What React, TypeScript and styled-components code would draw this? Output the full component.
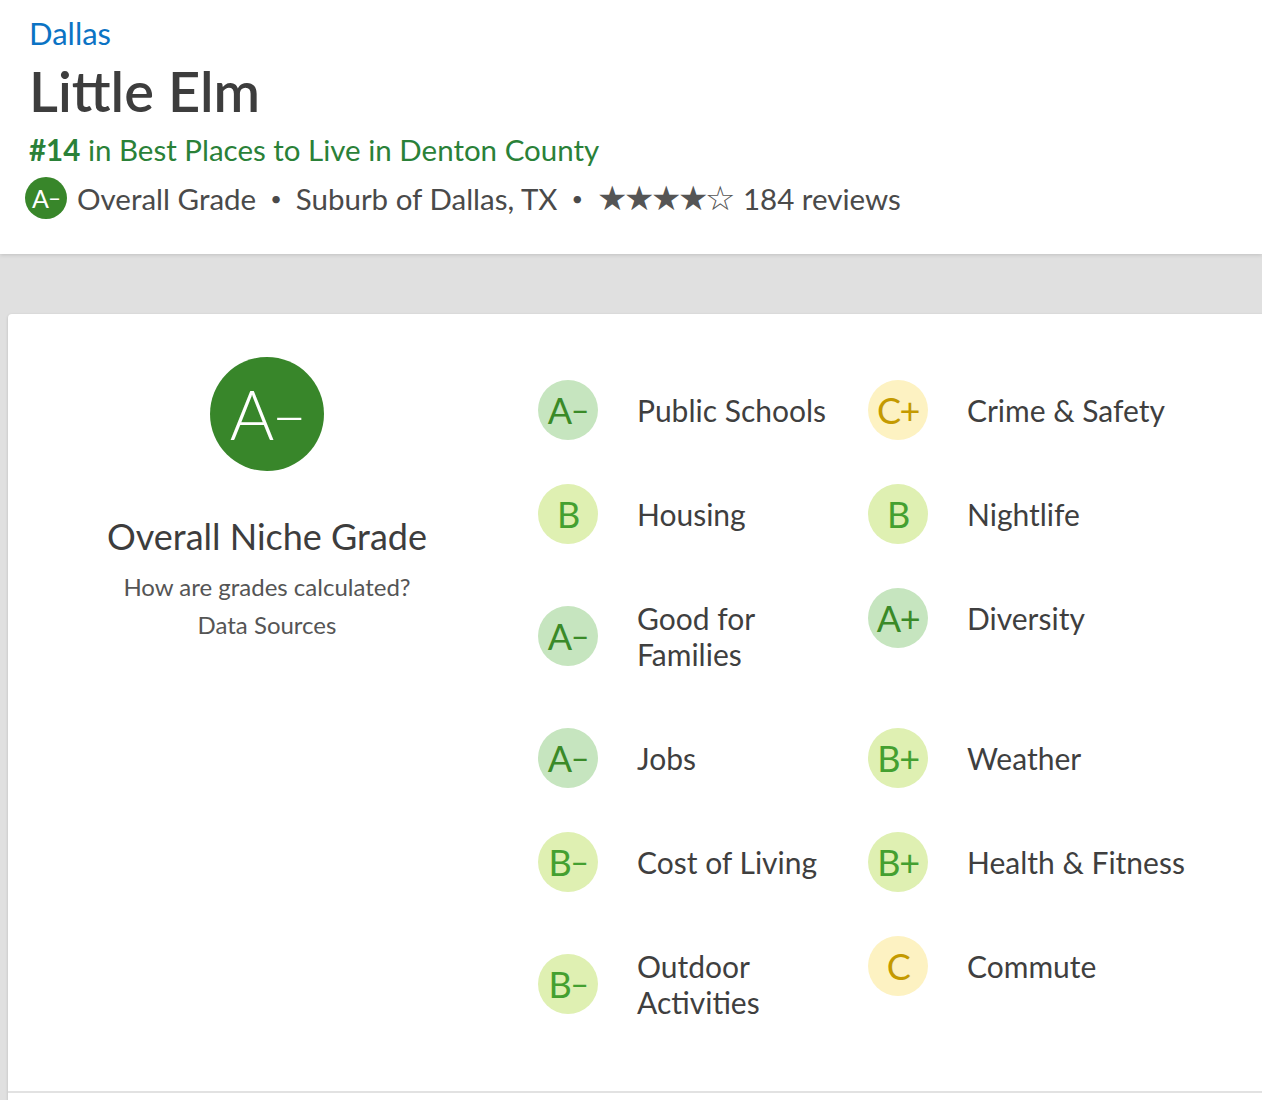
import React from 'react';
import styled, { createGlobalStyle } from 'styled-components';

const GlobalStyle = createGlobalStyle`
  body {
    margin: 0;
    background: #e0e0e0;
    font-family: Lato, 'Liberation Sans', sans-serif;
    overflow-x: hidden;
  }
`;

const Header = styled.header`
  position: relative;
  z-index: 1;
  height: 254px;
  box-sizing: border-box;
  padding: 15px 29px 0;
  background: #ffffff;
  box-shadow: 0 1px 4px rgba(0, 0, 0, 0.14);
`;

const Crumb = styled.a`
  display: block;
  color: #0b73c4;
  font-size: 31px;
  line-height: 36px;
  text-decoration: none;
`;

const Title = styled.h1`
  margin: 10px 0 0;
  color: #3d3d3d;
  font-size: 56px;
  line-height: 60px;
  font-weight: 600;
`;

const Ranking = styled.div`
  margin-top: 9px;
  color: #2a8138;
  font-size: 29.5px;
  line-height: 40px;

  strong {
    font-weight: 700;
  }
`;

const MetaRow = styled.div`
  display: flex;
  align-items: center;
  height: 44px;
  margin-top: 6px;
  margin-left: -4px;
  color: #4a4a4a;
  font-size: 29.5px;
`;

const tones = {
  A: { bg: '#c6e5bf', fg: '#3a8a28' },
  B: { bg: '#dff0b2', fg: '#44a030' },
  C: { bg: '#fdf2c2', fg: '#c49a00' },
};

type Tone = keyof typeof tones;

const Badge = styled.div<{ $size: number; $solid?: boolean; $tone: Tone }>`
  flex: none;
  display: flex;
  align-items: center;
  justify-content: center;
  width: ${({ $size }) => $size}px;
  height: ${({ $size }) => $size}px;
  border-radius: 50%;
  background: ${({ $solid, $tone }) => ($solid ? '#38862a' : tones[$tone].bg)};
  color: ${({ $solid, $tone }) => ($solid ? '#ffffff' : tones[$tone].fg)};
  font-size: ${({ $size }) => Math.round($size * 0.6)}px;
  font-weight: ${({ $size }) => ($size > 80 ? 300 : 400)};
  line-height: 1;
  letter-spacing: -0.04em;
`;

const Modifier = styled.span<{ $minus: boolean }>`
  font-size: ${({ $minus }) => ($minus ? '0.9em' : '1em')};
  vertical-align: ${({ $minus }) => ($minus ? '0.15em' : '0')};
`;

const Dot = styled.span`
  margin: 0 14px;
  font-size: 20px;
`;

const Stars = styled.span`
  margin-right: 11px;
  color: #555555;
  font-family: 'DejaVu Sans', sans-serif;
  font-size: 34px;
  letter-spacing: -3.5px;
`;

const Band = styled.main`
  padding: 60px 0 0 8px;
`;

const Card = styled.div`
  min-height: 900px;
  margin-right: -8px;
  background: #ffffff;
  border-radius: 4px 0 0 0;
  box-shadow: 0 1px 3px rgba(0, 0, 0, 0.18);
`;

const Summary = styled.section`
  display: flex;
  padding: 43px 0 59px;
  border-bottom: 2px solid #e2e2e2;
`;

const OverallColumn = styled.div`
  flex: 0 0 518px;
  display: flex;
  flex-direction: column;
  align-items: center;
`;

const OverallTitle = styled.div`
  margin-top: 43px;
  color: #3d3d3d;
  font-size: 36px;
  line-height: 44px;
`;

const OverallLink = styled.a<{ $first?: boolean }>`
  margin-top: ${({ $first }) => ($first ? 10 : 0)}px;
  color: #555555;
  font-size: 24px;
  line-height: 38px;
  text-decoration: none;
`;

const GradeGrid = styled.div`
  display: grid;
  grid-template-columns: repeat(2, 330px);
  row-gap: 44px;
  align-items: start;
  margin-left: 12px;
  padding-top: 23px;
`;

const GradeCell = styled.div`
  display: flex;
  align-items: center;
  gap: 39px;
`;

const GradeLabel = styled.div`
  max-width: 221px;
  padding: 12px 0;
  color: #3f3f3f;
  font-size: 30px;
  line-height: 36px;
`;

const Grade = ({ grade, size, solid }: { grade: string; size: number; solid?: boolean }) => {
  const mod = grade.slice(1);
  return (
    <Badge $size={size} $solid={solid} $tone={grade[0] as Tone}>
      {grade[0]}
      {mod && <Modifier $minus={mod === '–'}>{mod}</Modifier>}
    </Badge>
  );
};

const grades: [string, string][] = [
  ['A–', 'Public Schools'],
  ['C+', 'Crime & Safety'],
  ['B', 'Housing'],
  ['B', 'Nightlife'],
  ['A–', 'Good for Families'],
  ['A+', 'Diversity'],
  ['A–', 'Jobs'],
  ['B+', 'Weather'],
  ['B–', 'Cost of Living'],
  ['B+', 'Health & Fitness'],
  ['B–', 'Outdoor Activities'],
  ['C', 'Commute'],
];

const App = () => (
  <>
    <GlobalStyle />
    <Header>
      <Crumb href="#">Dallas</Crumb>
      <Title>Little Elm</Title>
      <Ranking>
        <strong>#14</strong> in Best Places to Live in Denton County
      </Ranking>
      <MetaRow>
        <Grade grade="A–" size={42} solid />
        <span style={{ marginLeft: 10 }}>Overall Grade</span>
        <Dot>•</Dot>
        <span>Suburb of Dallas, TX</span>
        <Dot>•</Dot>
        <Stars>★★★★☆</Stars>
        <span>184 reviews</span>
      </MetaRow>
    </Header>
    <Band>
      <Card>
        <Summary>
          <OverallColumn>
            <Grade grade="A–" size={114} solid />
            <OverallTitle>Overall Niche Grade</OverallTitle>
            <OverallLink href="#" $first>
              How are grades calculated?
            </OverallLink>
            <OverallLink href="#">Data Sources</OverallLink>
          </OverallColumn>
          <GradeGrid>
            {grades.map(([grade, label]) => (
              <GradeCell key={label}>
                <Grade grade={grade} size={60} />
                <GradeLabel>{label}</GradeLabel>
              </GradeCell>
            ))}
          </GradeGrid>
        </Summary>
      </Card>
    </Band>
  </>
);

export default App;
